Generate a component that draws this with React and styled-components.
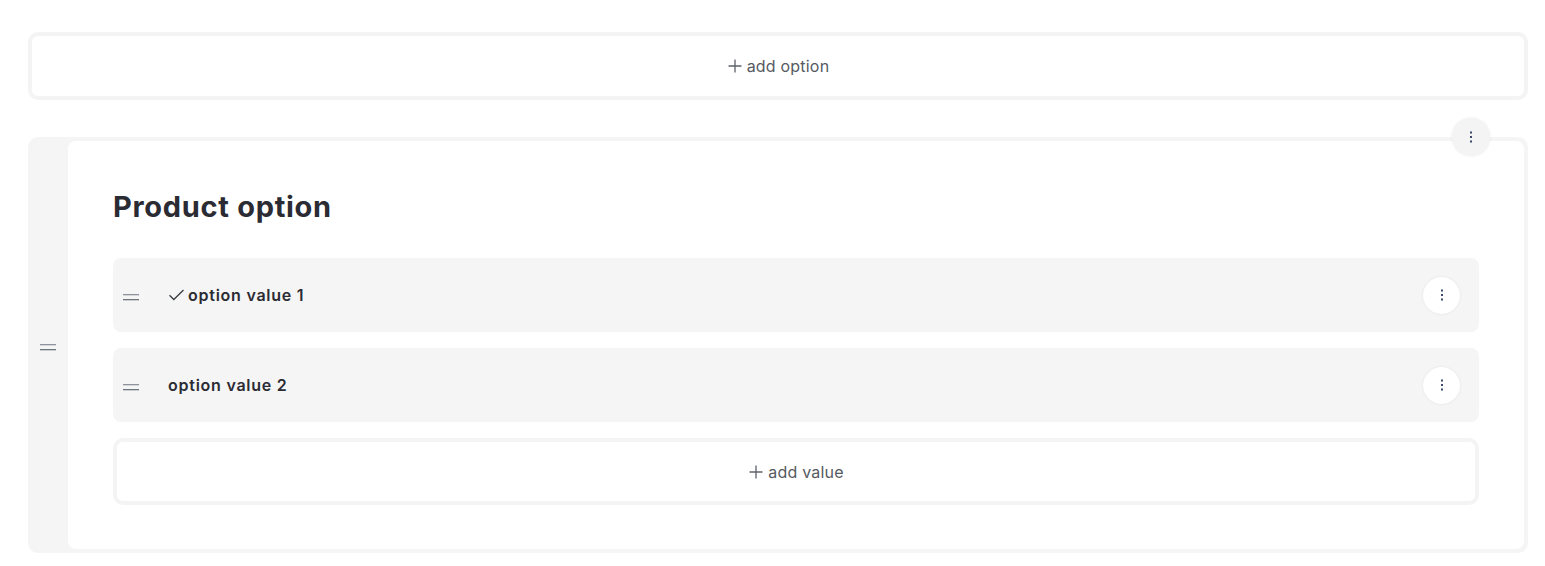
import React from "react";
import styled, { createGlobalStyle } from "styled-components";

const Global = createGlobalStyle`
  html, body { margin: 0; padding: 0; background: #ffffff; }
  body { font-family: Inter, "Noto Sans", sans-serif; color: #2b2b33; }
  * { box-sizing: border-box; }
`;

const Page = styled.div`
  padding: 32px 17px 0 28px;
  display: flex;
  flex-direction: column;
  gap: 37px;
`;

const AddButton = styled.button`
  display: flex;
  align-items: center;
  justify-content: center;
  gap: 4px;
  width: 100%;
  height: ${(p) => p.$h}px;
  background: #ffffff;
  border: 4px solid #f4f4f4;
  border-radius: 10px;
  font-family: Inter, "Noto Sans", sans-serif;
  font-size: 16px;
  letter-spacing: 0.2px;
  color: #555a61;
  cursor: pointer;
  padding: 0;
`;

const OptionCard = styled.section`
  position: relative;
  display: flex;
  background: #f5f5f5;
  border-radius: 10px;
  padding: 4px 4px 4px 0;
`;

const HandleColumn = styled.div`
  width: 40px;
  display: flex;
  align-items: center;
  justify-content: center;
  padding-top: 4px;
`;

const CardBody = styled.div`
  flex: 1;
  background: #ffffff;
  border-radius: 8px;
  padding: 49px 45px 44px 45px;
  display: flex;
  flex-direction: column;
`;

const Title = styled.h2`
  margin: 0 0 34px 0;
  font-size: 29px;
  line-height: 34px;
  font-weight: 700;
  color: #2b2b33;
  letter-spacing: 0.7px;
`;

const ValueList = styled.div`
  display: flex;
  flex-direction: column;
  gap: 16px;
`;

const ValueRow = styled.div`
  display: flex;
  align-items: center;
  height: 74px;
  background: #f5f5f5;
  border-radius: 8px;
  padding: 0 19px 0 10px;
`;

const RowHandle = styled.div`
  width: 16px;
  display: flex;
  justify-content: center;
  margin-right: 29px;
  padding-top: 4px;
`;

const ValueLabel = styled.div`
  flex: 1;
  display: flex;
  align-items: center;
  gap: 3px;
  font-size: 16px;
  font-weight: 600;
  letter-spacing: 0.75px;
  color: #2b2b33;
`;

const Kebab = styled.button`
  width: ${(p) => p.$size}px;
  height: ${(p) => p.$size}px;
  border-radius: 50%;
  border: none;
  background: ${(p) => p.$bg};
  box-shadow: 0 0 3px rgba(0, 0, 0, 0.08);
  display: flex;
  align-items: center;
  justify-content: center;
  padding: 0;
  cursor: pointer;
`;

const CardMenu = styled.div`
  position: absolute;
  top: -19px;
  right: 38px;
`;

const HandleIcon = () => (
  <svg width="16" height="7" viewBox="0 0 16 7">
    <rect x="0" y="0" width="16" height="1.3" fill="#8e929b" />
    <rect x="0" y="5" width="16" height="1.3" fill="#6f737c" />
  </svg>
);

const Dots = () => (
  <svg width="4" height="12" viewBox="0 0 4 12">
    <rect x="1" y="0.5" width="2" height="2" fill="#3b4a6b" />
    <rect x="1" y="5" width="2" height="2" fill="#3b4a6b" />
    <rect x="1" y="9.5" width="2" height="2" fill="#3b4a6b" />
  </svg>
);

const Plus = () => (
  <svg width="16" height="16" viewBox="0 0 16 16">
    <path d="M8 1.5v13M1.5 8h13" stroke="#5d6168" strokeWidth="1.3" fill="none" />
  </svg>
);

const Check = () => (
  <svg width="17" height="12" viewBox="0 0 17 12">
    <path d="M1.5 6.2l4.3 4.3L15.5 1" stroke="#3a3d44" strokeWidth="1.3" fill="none" />
  </svg>
);

const values = [
  { label: "option value 1", checked: true },
  { label: "option value 2", checked: false },
];

export default function App() {
  return (
    <>
      <Global />
      <Page>
        <AddButton $h={68}>
          <Plus />
          add option
        </AddButton>
        <OptionCard>
          <CardMenu>
            <Kebab $size={38} $bg="#f4f4f4">
              <Dots />
            </Kebab>
          </CardMenu>
          <HandleColumn>
            <HandleIcon />
          </HandleColumn>
          <CardBody>
            <Title>Product option</Title>
            <ValueList>
              {values.map((v) => (
                <ValueRow key={v.label}>
                  <RowHandle>
                    <HandleIcon />
                  </RowHandle>
                  <ValueLabel>
                    {v.checked && <Check />}
                    {v.label}
                  </ValueLabel>
                  <Kebab $size={37} $bg="#ffffff">
                    <Dots />
                  </Kebab>
                </ValueRow>
              ))}
              <AddButton $h={67}>
                <Plus />
                add value
              </AddButton>
            </ValueList>
          </CardBody>
        </OptionCard>
      </Page>
    </>
  );
}
